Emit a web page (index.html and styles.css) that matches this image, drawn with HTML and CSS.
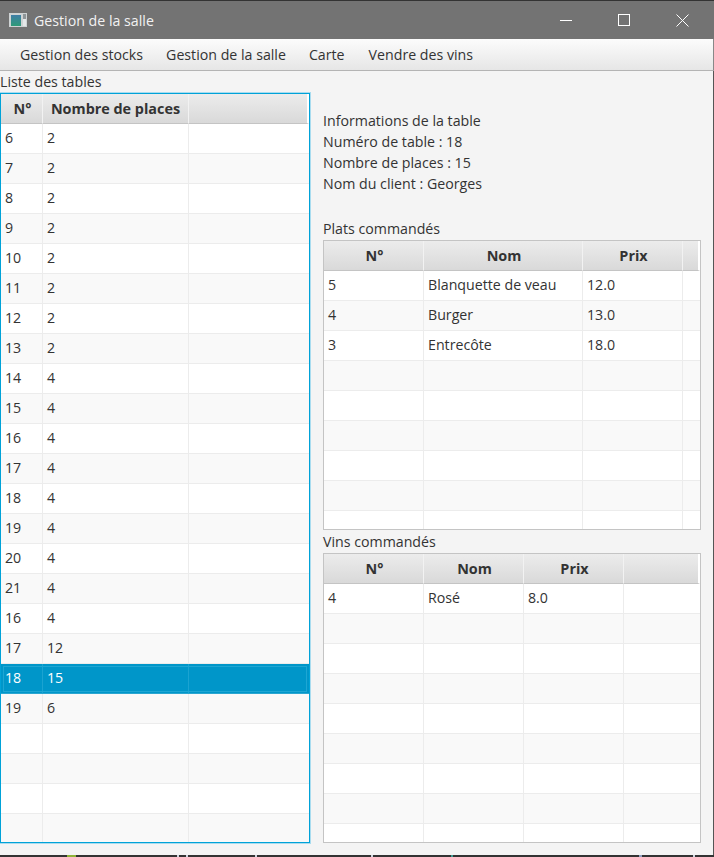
FILE: index.html
```html
<!DOCTYPE html>
<html>
	<head>
		<meta charset="utf-8">
		<title>Gestion de la salle</title>
		<link rel="stylesheet" href="styles.css">
	</head>
	<body>
		<div class="titlebar">
			<svg class="app-icon" width="18" height="14" viewBox="0 0 18 14">
				<defs>
					<linearGradient id="panel" x1="0" y1="0" x2="0" y2="1">
						<stop offset="0" stop-color="#3f7ea6"/>
						<stop offset="1" stop-color="#2f9a78"/>
					</linearGradient>
				</defs>
				<rect width="18" height="14" fill="#cfd3d4"/>
				<rect x="2" y="2" width="10" height="11" fill="url(#panel)"/>
				<rect x="14" y="1" width="3" height="5" fill="#8f9699"/>
				<rect x="14" y="6" width="3" height="7" fill="#e4e7e8"/>
			</svg>
			<span class="title-text">Gestion de la salle</span>
			<div class="win-buttons">
				<svg width="12" height="13" viewBox="0 0 12 13"><path d="M0 6.5H12" stroke="#fff" fill="none"/></svg>
				<svg width="12" height="13" viewBox="0 0 12 13"><rect x="0.5" y="0.5" width="11" height="11" stroke="#fff" fill="none"/></svg>
				<svg width="13" height="13" viewBox="0 0 13 13"><path d="M0.5 0.5L12.5 12.5M12.5 0.5L0.5 12.5" stroke="#fff" fill="none"/></svg>
			</div>
		</div>
		<div class="menubar">
			<span>Gestion des stocks</span>
			<span>Gestion de la salle</span>
			<span>Carte</span>
			<span>Vendre des vins</span>
		</div>
		<div class="content">
			<div class="left">
				<div class="label">Liste des tables</div>
				<div class="frame frame-focus">
					<table class="grid">
						<colgroup><col class="c-num"><col class="c-places"><col></colgroup>
						<thead><tr><th>N°</th><th>Nombre de places</th><th></th></tr></thead>
						<tbody>
							<tr><td>6</td><td>2</td><td></td></tr>
							<tr><td>7</td><td>2</td><td></td></tr>
							<tr><td>8</td><td>2</td><td></td></tr>
							<tr><td>9</td><td>2</td><td></td></tr>
							<tr><td>10</td><td>2</td><td></td></tr>
							<tr><td>11</td><td>2</td><td></td></tr>
							<tr><td>12</td><td>2</td><td></td></tr>
							<tr><td>13</td><td>2</td><td></td></tr>
							<tr><td>14</td><td>4</td><td></td></tr>
							<tr><td>15</td><td>4</td><td></td></tr>
							<tr><td>16</td><td>4</td><td></td></tr>
							<tr><td>17</td><td>4</td><td></td></tr>
							<tr><td>18</td><td>4</td><td></td></tr>
							<tr><td>19</td><td>4</td><td></td></tr>
							<tr><td>20</td><td>4</td><td></td></tr>
							<tr><td>21</td><td>4</td><td></td></tr>
							<tr><td>16</td><td>4</td><td></td></tr>
							<tr><td>17</td><td>12</td><td></td></tr>
							<tr class="selected"><td>18</td><td>15</td><td></td></tr>
							<tr><td>19</td><td>6</td><td></td></tr>
							<tr><td></td><td></td><td></td></tr>
							<tr><td></td><td></td><td></td></tr>
							<tr><td></td><td></td><td></td></tr>
							<tr><td></td><td></td><td></td></tr>
						</tbody>
					</table>
				</div>
			</div>
			<div class="right">
				<div class="infos">
					<div>Informations de la table</div>
					<div>Numéro de table : 18</div>
					<div>Nombre de places : 15</div>
					<div>Nom du client : Georges</div>
				</div>
				<div class="label label-plats">Plats commandés</div>
				<div class="frame">
					<table class="grid">
						<colgroup><col class="c-w100"><col class="c-w159"><col class="c-w100"><col></colgroup>
						<thead><tr><th>N°</th><th>Nom</th><th>Prix</th><th></th></tr></thead>
						<tbody>
							<tr><td>5</td><td>Blanquette de veau</td><td>12.0</td><td></td></tr>
							<tr><td>4</td><td>Burger</td><td>13.0</td><td></td></tr>
							<tr><td>3</td><td>Entrecôte</td><td>18.0</td><td></td></tr>
							<tr><td></td><td></td><td></td><td></td></tr>
							<tr><td></td><td></td><td></td><td></td></tr>
							<tr><td></td><td></td><td></td><td></td></tr>
							<tr><td></td><td></td><td></td><td></td></tr>
							<tr><td></td><td></td><td></td><td></td></tr>
							<tr><td></td><td></td><td></td><td></td></tr>
						</tbody>
					</table>
				</div>
				<div class="label label-vins">Vins commandés</div>
				<div class="frame">
					<table class="grid">
						<colgroup><col class="c-w100"><col class="c-w100"><col class="c-w100"><col></colgroup>
						<thead><tr><th>N°</th><th>Nom</th><th>Prix</th><th></th></tr></thead>
						<tbody>
							<tr><td>4</td><td>Rosé</td><td>8.0</td><td></td></tr>
							<tr><td></td><td></td><td></td><td></td></tr>
							<tr><td></td><td></td><td></td><td></td></tr>
							<tr><td></td><td></td><td></td><td></td></tr>
							<tr><td></td><td></td><td></td><td></td></tr>
							<tr><td></td><td></td><td></td><td></td></tr>
							<tr><td></td><td></td><td></td><td></td></tr>
							<tr><td></td><td></td><td></td><td></td></tr>
							<tr><td></td><td></td><td></td><td></td></tr>
						</tbody>
					</table>
				</div>
			</div>
		</div>
		<div class="taskbar-edge"></div>
	</body>
</html>
```
FILE: styles.css
```css
html, body{
	margin: 0;
	padding: 0;
	height: 100%;
}
body{
	display: flex;
	flex-direction: column;
	overflow: hidden;
	background: #f4f4f4;
	color: #333;
	font-family: "Open Sans", "Noto Sans", "Liberation Sans", sans-serif;
	font-size: 14.2px;
}
.titlebar{
	height: 38px;
	flex: none;
	display: flex;
	align-items: center;
	background: #737373;
	border-top: 1px solid #333;
	color: #fff;
}
.app-icon{
	margin-left: 9px;
	margin-right: 7px;
}
.title-text{
	color: #f2f2f2;
}
.win-buttons{
	margin-left: auto;
	margin-right: 25px;
	display: flex;
	align-items: center;
	gap: 46px;
}
.menubar{
	height: 32px;
	flex: none;
	box-sizing: border-box;
	display: flex;
	align-items: center;
	padding-left: 20px;
	gap: 23px;
	background: linear-gradient(#fcfcfc, #e6e6e6);
	border-bottom: 1px solid #b4b4b4;
	border-right: 1px solid #888;
}
.menubar span:last-child{
	margin-left: 1px;
}
.content{
	flex: 1;
	min-height: 0;
	display: flex;
	padding-bottom: 12px;
	border-right: 1px solid #555;
}
.left{
	width: 310px;
	flex: none;
	display: flex;
	flex-direction: column;
}
.right{
	width: 378px;
	margin-left: 13px;
	display: flex;
	flex-direction: column;
}
.label{
	height: 22px;
	line-height: 22px;
	flex: none;
}
.infos{
	margin-top: 39px;
	line-height: 21.1px;
}
.label-plats{
	margin-top: 24px;
	height: 22px;
}
.label-vins{
	height: 23px;
	line-height: 24px;
}
.frame{
	box-sizing: border-box;
	height: 290px;
	overflow: hidden;
	background: #fff;
	border: 1px solid #c4c4c4;
	flex: none;
}
.frame-focus{
	flex: 1;
	height: auto;
	border: 1px solid #00a2d8;
	box-shadow: 0 0 0 1px #a9dcef;
}
.grid{
	width: 100%;
	table-layout: fixed;
	border-collapse: separate;
	border-spacing: 0;
}
.c-num{
	width: 42px;
}
.c-places{
	width: 146px;
}
.c-w100{
	width: 100px;
}
.c-w159{
	width: 159px;
}
.grid th{
	height: 30px;
	box-sizing: border-box;
	padding: 0;
	font-size: 14.4px;
	font-weight: bold;
	text-align: center;
	color: #333;
	background: linear-gradient(#ececec, #d9d9d9);
	border-right: 1px solid #f2f2f2;
	border-bottom: 1px solid #c4c4c4;
}
.grid th:first-child, .right .grid th{
	padding-left: 2px;
}
.grid td{
	height: 30px;
	box-sizing: border-box;
	padding: 0 0 2px 4px;
	white-space: nowrap;
	overflow: hidden;
	border-right: 1px solid #ececec;
	border-bottom: 1px solid #ececec;
}
.grid th:last-child{
	border-right: 2px solid #fff;
}
.grid td:last-child{
	border-right: none;
}
.grid tbody tr:nth-child(even) td{
	background: #f9f9f9;
}
.grid tbody tr.selected{
	outline: 1px solid #1ea6d3;
	outline-offset: -3px;
}
.grid tbody tr.selected td{
	background: #0096c9;
	color: #fff;
	border-right-color: #1ba3d1;
	border-bottom: 1px solid #2ba6d0;
}
.taskbar-edge{
	height: 2px;
	flex: none;
	background: linear-gradient(90deg,
		#333 67px, #8fb339 67px, #8fb339 76px, #333 76px,
		#333 177px, #cfd6e0 177px, #cfd6e0 179px, #333 179px,
		#333 186px, #cfd6e0 186px, #cfd6e0 188px, #333 188px,
		#333 255px, #cfd6e0 255px, #cfd6e0 257px, #333 257px,
		#333 371px, #cfd6e0 371px, #cfd6e0 373px, #333 373px,
		#333 451px, #3f9d94 451px, #3f9d94 453px, #333 453px,
		#333 639px, #8f9fc0 639px, #8f9fc0 642px, #333 642px,
		#333 693px, #cfd6e0 693px, #cfd6e0 695px, #333 695px);
}
```
